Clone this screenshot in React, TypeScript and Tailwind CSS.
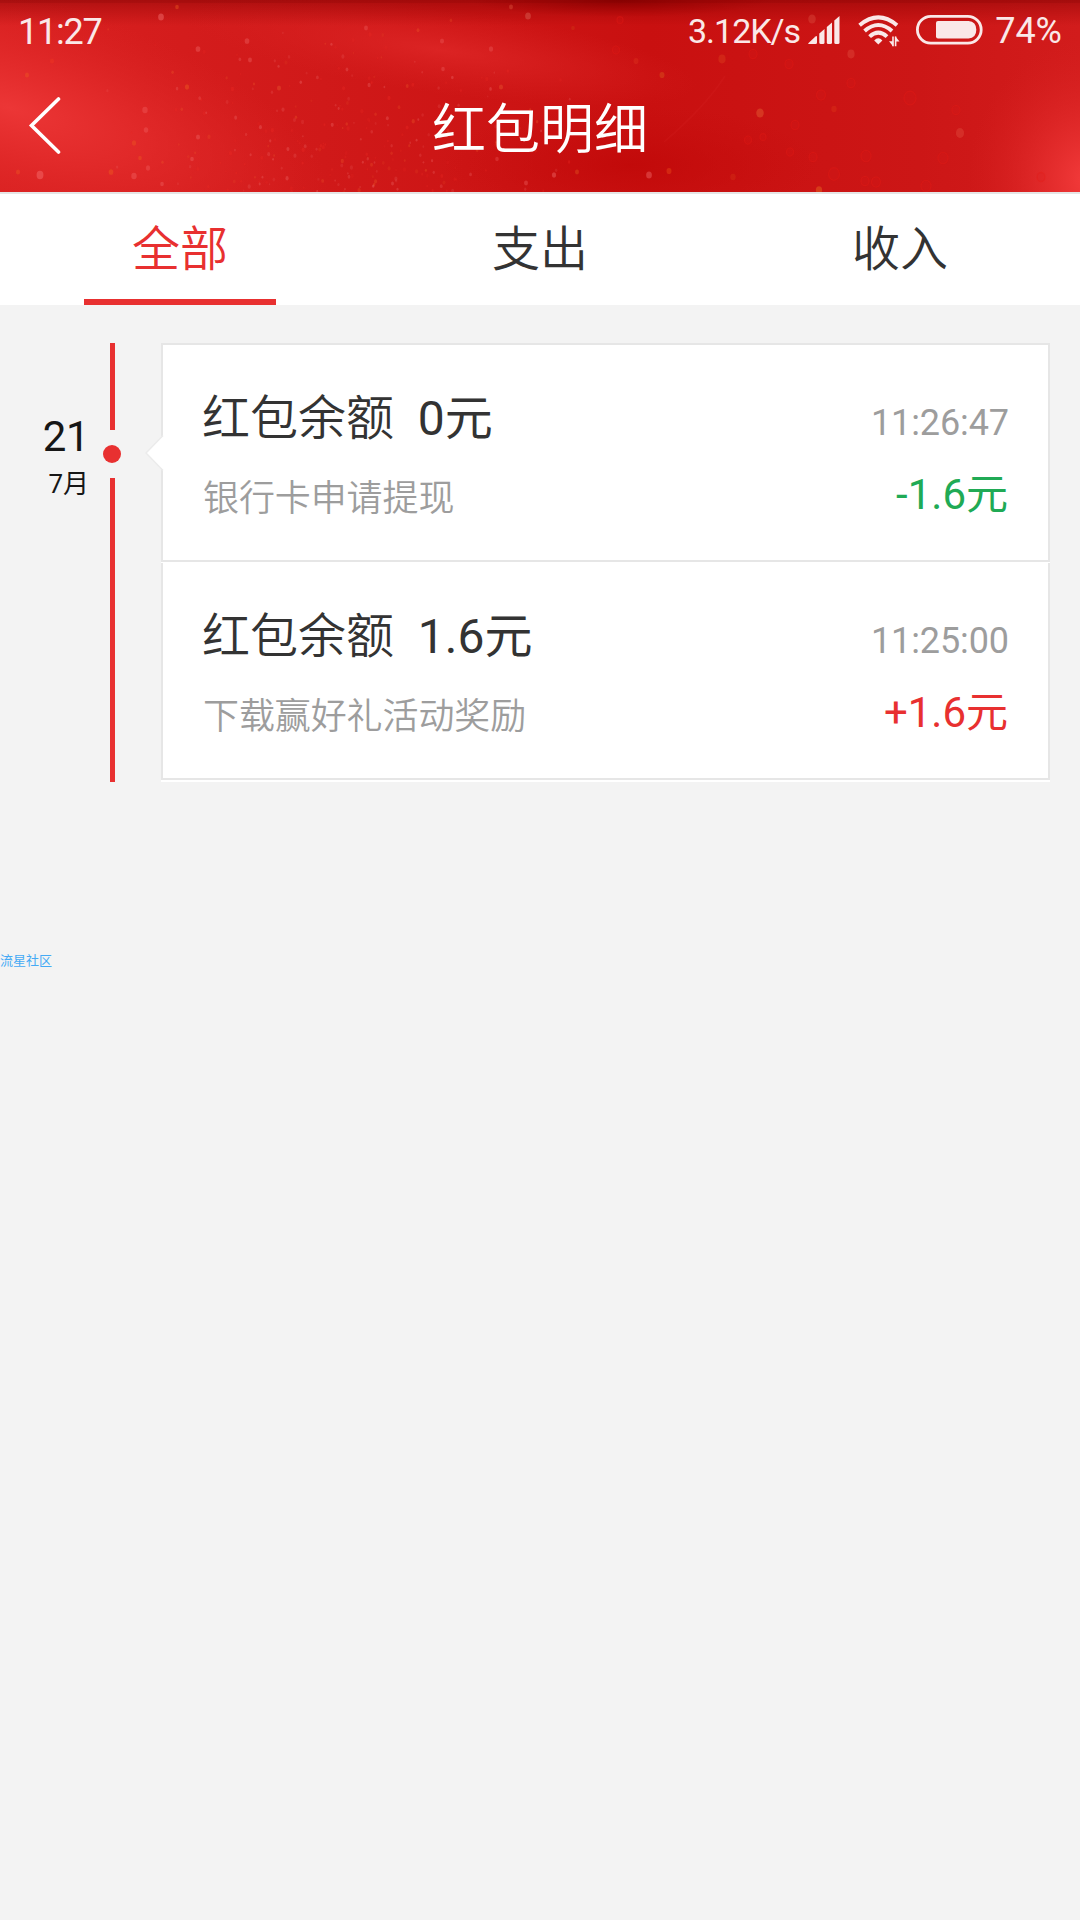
import { memo } from 'react'
import clsx from 'clsx'

interface RecordItem {
  id: number
  balance: string
  time: string
  remark: string
  amount: string
  income: boolean
}

const TABS = ['全部', '支出', '收入']

const RECORDS: RecordItem[] = [
  { id: 1, balance: '0元', time: '11:26:47', remark: '银行卡申请提现', amount: '-1.6元', income: false },
  { id: 2, balance: '1.6元', time: '11:25:00', remark: '下载赢好礼活动奖励', amount: '+1.6元', income: true },
]

export default function App() {
  return (
    <div className="w-[1080px] h-[1920px] overflow-hidden bg-[#f3f3f3] font-['Roboto','Noto_Sans_CJK_SC',sans-serif]">
      <header className="relative h-[194px] border-b-2 border-[#e5e5e5] overflow-hidden text-white">
        <HeaderBackdrop />
        <div className="relative">
          <StatusBar />
          <NavBar />
        </div>
      </header>
      <Tabs active={0} />
      <main className="flex pt-[38px]">
        <DateColumn />
        <Timeline />
        <RecordList />
      </main>
      <p className="mt-[169px] text-[13px] leading-5 text-[#45aaf5]">流星社区</p>
    </div>
  )
}

// ─── Header ───────────────────────────────────────────────────────────────────

function StatusBar() {
  return (
    <div className="flex h-[60px] items-center pl-[18px] pr-[18px] text-[#fae8e8]">
      <span className="pt-1 text-[36px] leading-[60px] tracking-[-1.2px]">11:27</span>
      <span className="ml-auto pt-[2px] text-[34px] leading-[60px] tracking-[-1px]">3.12K/s</span>
      <SignalIcon />
      <WifiIcon />
      <BatteryIcon />
      <span className="ml-[12px] pt-[2px] text-[36px] leading-[60px]">74%</span>
    </div>
  )
}

function NavBar() {
  return (
    <div className="grid h-[132px] grid-cols-[1fr_auto_1fr] items-center">
      <svg width="34" height="60" viewBox="0 0 34 60" fill="none" className="ml-[27px]">
        <path d="M31.5 3L4.5 29.5L31.5 56" stroke="currentColor" strokeWidth="3.6" strokeLinecap="round" />
      </svg>
      <h1 className="pt-[10px] text-[54px] font-[350] leading-[64px]">红包明细</h1>
      <span />
    </div>
  )
}

function SignalIcon() {
  return (
    <svg width="32" height="30" viewBox="0 0 32 30" fill="currentColor" className="ml-[8px]">
      <path d="M0 28.5L7.5 21.5Q9 20.5 9 22V27.5Q9 29 7.5 29H0.8Z" />
      <path d="M11.3 18.5L16.5 14V27.5Q16.5 29 15 29H12.8Q11.3 29 11.3 27.5Z" />
      <path d="M18.8 12L24 7.5V27.5Q24 29 22.5 29H20.3Q18.8 29 18.8 27.5Z" />
      <path d="M26.3 5.5L31.5 1V27.5Q31.5 29 30 29H27.8Q26.3 29 26.3 27.5Z" />
    </svg>
  )
}

function WifiIcon() {
  return (
    <svg width="42" height="32" viewBox="0 0 42 32" fill="none" stroke="currentColor" className="ml-[18px] mt-[2px]">
      <path d="M1.6 10.2Q20.3 -5.4 39 10.2" strokeWidth="4" />
      <path d="M6.6 16Q20.3 4 34 16" strokeWidth="4" />
      <path d="M11.6 21.6Q20.3 13.6 29 21.6" strokeWidth="4" />
      <path d="M16.2 25.4Q20.3 21 24.4 25.4L20.3 29.4Z" fill="currentColor" stroke="none" />
      <path d="M35 21.5V31.2M37.6 21.5V31.2" strokeWidth="1.6" />
      <path d="M35.2 31.4L31 26.2H35.2ZM37.3 21.3L41.5 26.4H37.3Z" fill="currentColor" stroke="none" />
    </svg>
  )
}

function BatteryIcon() {
  return (
    <svg width="67" height="30" viewBox="0 0 67 30" fill="none" className="ml-[16px]">
      <rect x="1.4" y="1.4" width="63.8" height="26.8" rx="13.4" stroke="currentColor" strokeWidth="2.8" />
      <path d="M22 6H52.5Q60.3 6.6 60.3 14.8T52.5 23.6H22Q20 23.6 20 21.6V8Q20 6 22 6Z" fill="currentColor" />
    </svg>
  )
}

// Larger bokeh spots: x, y, radius, colour, opacity
const SPOTS: [number, number, number, string, number][] = [
  [161, 17, 3.2, '#f06a6a', 0.5], [198, 49, 2.6, '#f06a6a', 0.4], [145, 110, 3, '#f06060', 0.4],
  [146, 130, 2.5, '#f06060', 0.4], [40, 175, 3.8, '#f46a6a', 0.5], [134, 176, 3, '#f06060', 0.45],
  [148, 168, 2.4, '#f06060', 0.4], [177, 7, 2, '#f06020', 0.4], [187, 87, 2.4, '#ee5a20', 0.45],
  [111, 172, 2.6, '#ee5a20', 0.45], [134, 143, 2.4, '#ee5a20', 0.4], [18, 172, 2.3, '#ee5a20', 0.4],
  [140, 158, 2, '#ee5a20', 0.4], [27, 75, 2.3, '#f06020', 0.35], [52, 61, 2.3, '#f03a20', 0.4],
  [247, 41, 2.6, '#ee6565', 0.4], [250, 60, 2.2, '#ee6565', 0.4], [198, 137, 2.3, '#ee6565', 0.4],
  [192, 159, 2, '#ee6565', 0.4], [162, 184, 2, '#ee6565', 0.4], [279, 88, 2.3, '#e85a30', 0.4],
  [366, 28, 2.2, '#ea5a5a', 0.4], [442, 41, 2.3, '#ea5a5a', 0.4], [491, 49, 2.4, '#ea5a5a', 0.4],
  [528, 16, 3.2, '#d85c50', 0.5], [511, 7, 2.2, '#e05a40', 0.4], [501, 87, 2.3, '#e85a30', 0.4],
  [443, 69, 2, '#ea5a5a', 0.4], [526, 183, 2.2, '#ee6060', 0.4], [497, 159, 2, '#ea5a5a', 0.35],
  [722, 59, 4, '#e04a20', 0.35], [636, 61, 2.8, '#e03a20', 0.35], [662, 75, 2.8, '#dc6a20', 0.35],
  [812, 19, 4.2, '#dc5040', 0.4], [851, 54, 4, '#e05040', 0.4], [760, 113, 4.2, '#e25a30', 0.5],
  [834, 109, 3, '#e03a18', 0.35], [960, 133, 4.5, '#e25040', 0.4], [649, 175, 3.2, '#ea6060', 0.5],
  [669, 171, 2.8, '#e64a18', 0.45], [554, 175, 2.4, '#ea6060', 0.5], [577, 172, 2.2, '#e05a20', 0.4],
  [819, 190, 3.5, '#e66a20', 0.45], [733, 177, 3, '#d83a18', 0.35], [573, 28, 2, '#d04018', 0.35],
]

const RINGS: [number, number, number][] = [
  [789, 64, 4], [821, 95, 4.5], [851, 83, 4], [753, 54, 4], [910, 98, 6], [956, 110, 4], [866, 156, 5],
  [834, 174, 5.5], [876, 182, 4.5], [813, 157, 4], [790, 152, 3.5], [748, 140, 3.5], [943, 158, 5],
  [865, 181, 4], [795, 125, 4], [763, 137, 3], [926, 186, 5], [1041, 177, 4], [616, 50, 3.5], [620, 20, 3],
]

// Fine glitter, spread with a small LCG so it is stable between renders
const GLITTER = (() => {
  let seed = 11
  const next = () => {
    seed = (seed * 16807) % 2147483647
    return seed / 2147483647
  }
  return Array.from({ length: 270 }, () => ({
    x: 345 + (next() + next() + next() - 1.5) * 190,
    y: 14 + Math.sqrt(next()) * 178,
    r: 0.7 + next() * 0.9,
    fill: next() > 0.75 ? '#f0602a' : next() > 0.5 ? '#ef2a24' : '#f07070',
    opacity: 0.12 + next() * 0.22,
  }))
})()

const HeaderBackdrop = memo(function HeaderBackdrop() {
  return (
    <svg width="1080" height="192" viewBox="0 0 1080 192" className="absolute left-0 top-0">
      <defs>
        <linearGradient id="base" x1="0" x2="1" y1="0" y2="0">
          <stop offset="0" stopColor="#d92020" />
          <stop offset="0.3" stopColor="#d01919" />
          <stop offset="0.6" stopColor="#c91010" />
          <stop offset="0.85" stopColor="#cc1616" />
          <stop offset="1" stopColor="#d21c1c" />
        </linearGradient>
        <radialGradient id="left">
          <stop offset="0" stopColor="#ec3636" />
          <stop offset="0.4" stopColor="#e42c2c" stopOpacity="0.8" />
          <stop offset="1" stopColor="#dc2424" stopOpacity="0" />
        </radialGradient>
        <radialGradient id="right">
          <stop offset="0" stopColor="#f43c3c" />
          <stop offset="0.4" stopColor="#e83030" stopOpacity="0.65" />
          <stop offset="1" stopColor="#d82020" stopOpacity="0" />
        </radialGradient>
        <radialGradient id="band">
          <stop offset="0" stopColor="#de2626" stopOpacity="0.85" />
          <stop offset="1" stopColor="#d82020" stopOpacity="0" />
        </radialGradient>
        <radialGradient id="dark">
          <stop offset="0" stopColor="#c00808" stopOpacity="0.8" />
          <stop offset="1" stopColor="#c40c0c" stopOpacity="0" />
        </radialGradient>
        <radialGradient id="fold">
          <stop offset="0" stopColor="#840000" stopOpacity="0.8" />
          <stop offset="1" stopColor="#a00000" stopOpacity="0" />
        </radialGradient>
        <linearGradient id="shade" x1="0" x2="0" y1="0" y2="1">
          <stop offset="0" stopColor="#800000" stopOpacity="0.45" />
          <stop offset="1" stopColor="#900000" stopOpacity="0" />
        </linearGradient>
      </defs>
      <rect width="1080" height="192" fill="url(#base)" />
      <ellipse cx="10" cy="108" rx="330" ry="115" fill="url(#left)" transform="rotate(16 10 108)" />
      <ellipse cx="440" cy="50" rx="260" ry="44" fill="url(#band)" transform="rotate(8 440 50)" />
      <ellipse cx="630" cy="165" rx="190" ry="60" fill="url(#dark)" />
      <ellipse cx="1088" cy="180" rx="120" ry="140" fill="url(#right)" />
      <ellipse cx="620" cy="0" rx="150" ry="17" fill="url(#fold)" />
      <rect width="1080" height="26" fill="url(#shade)" />
      <rect width="1080" height="3" fill="#700000" fillOpacity="0.15" />
      <path d="M725 76Q706 106 664 142" stroke="#e03030" strokeOpacity="0.15" strokeWidth="1.5" fill="none" />
      {GLITTER.map((g, i) => (
        <ellipse key={i} cx={g.x} cy={g.y} rx={g.r} ry={g.r * 1.4} fill={g.fill} opacity={g.opacity} />
      ))}
      {SPOTS.map(([x, y, r, fill, opacity], i) => (
        <ellipse key={i} cx={x} cy={y} rx={r * 0.9} ry={r * 1.1} fill={fill} opacity={opacity} />
      ))}
      {RINGS.map(([x, y, r], i) => (
        <ellipse key={i} cx={x} cy={y} rx={r} ry={r * 1.15} fill="#e01818" fillOpacity="0.15" stroke="#e41c18" strokeOpacity="0.35" strokeWidth="1.2" />
      ))}
    </svg>
  )
})

// ─── Tabs ─────────────────────────────────────────────────────────────────────

function Tabs({ active }: { active: number }) {
  return (
    <nav className="grid h-[111px] grid-cols-3 justify-items-center bg-white">
      {TABS.map((tab, i) => (
        <button
          key={tab}
          className={clsx(
            'w-[192px] border-b-[6px] pt-[7px] text-[48px] font-[350] leading-[98px]',
            i === active ? 'border-[#e83030] text-[#e83030]' : 'border-transparent text-[#333333]'
          )}
        >
          {tab}
        </button>
      ))}
    </nav>
  )
}

// ─── Timeline ─────────────────────────────────────────────────────────────────

function DateColumn() {
  return (
    <div className="flex w-[89px] flex-col items-end pt-[69px] text-[#161616]">
      <span className="text-[42px] leading-[50px] tracking-[-0.5px]">21</span>
      <span className="mt-[7px] text-[26px] leading-[30px]">7月</span>
    </div>
  )
}

function Timeline() {
  return (
    <div className="ml-[14px] flex w-[18px] flex-col items-center">
      <i className="h-[87px] w-[5px] bg-[#e83030]" />
      <i className="my-[15px] h-[18px] w-[18px] rounded-full bg-[#e83030]" />
      <i className="w-[5px] flex-1 bg-[#e83030]" />
    </div>
  )
}

function RecordList() {
  return (
    <div className="relative ml-[40px] w-[889px] bg-white pb-[2px]">
      <svg width="19" height="38" viewBox="0 0 19 38" className="absolute -left-[16px] top-[91px]">
        <path d="M19 1L1.5 19L19 37Z" fill="#fff" />
        <path d="M18 1.5L1 19L18 36.5" fill="none" stroke="#ebebeb" strokeWidth="1.5" />
      </svg>
      <RecordCard record={RECORDS[0]} first />
      <RecordCard record={RECORDS[1]} />
    </div>
  )
}

function RecordCard({ record, first }: { record: RecordItem; first?: boolean }) {
  return (
    <section
      className={clsx(
        'border-x-2 border-b-2 border-[#e6e6e6] px-[40px] pt-[44px]',
        first ? 'mb-px h-[219px] border-t-2' : 'h-[217px]'
      )}
    >
      <div className="flex h-[60px] items-baseline justify-between">
        <h2 className="-ml-px whitespace-pre text-[48px] leading-[60px] text-[#333333]">
          <span className="font-[350]">红包余额</span>
          {`  ${record.balance}`}
        </h2>
        <time className="-mr-px text-[36px] tracking-[-0.1px] text-[#9d9d9d]">{record.time}</time>
      </div>
      <div className="mt-[21px] flex h-[50px] items-start justify-between">
        <p className="text-[36px] font-[350] leading-[58px] tracking-[-0.1px] text-[#9d9d9d]">{record.remark}</p>
        <span className={clsx('text-[42px] leading-[50px]', record.income ? 'text-[#e83030]' : 'text-[#20aa55]')}>
          {record.amount}
        </span>
      </div>
    </section>
  )
}
